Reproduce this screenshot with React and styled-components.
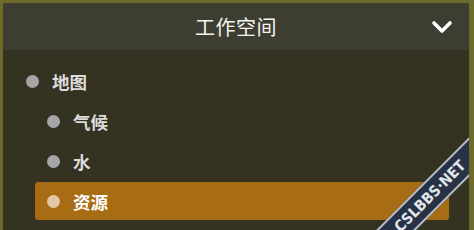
import React from "react";
import styled, { createGlobalStyle } from "styled-components";

const Global = createGlobalStyle`
  html, body { margin: 0; padding: 0; background: #343221; overflow: hidden; }
  body { font-family: "Noto Sans CJK SC", "Noto Sans", sans-serif; }
`;

const Frame = styled.div`
  box-sizing: border-box;
  width: 474px;
  height: 230px;
  overflow: hidden;
  background: #6d6a2c;
  padding: 3px 5px 0 3px;
`;

const Panel = styled.div`
  position: relative;
  overflow: hidden;
  height: 100%;
  background: #343221;
  display: flex;
  flex-direction: column;
`;

const Header = styled.div`
  height: 47px;
  flex: none;
  background: #3d3d32;
  display: flex;
  align-items: center;
  justify-content: center;
  position: relative;
`;

const Title = styled.div`
  color: #f4f4f0;
  font-size: 20px;
  font-weight: 400;
  letter-spacing: 0.5px;
  line-height: 1;
`;

const Toggle = styled.button`
  position: absolute;
  right: 16px;
  top: 50%;
  transform: translateY(-50%);
  background: none;
  border: none;
  padding: 0;
  display: flex;
`;

const List = styled.ul`
  list-style: none;
  margin: 0;
  padding: 12px 20px 0 11px;
  display: flex;
  flex-direction: column;
  gap: 2px;
`;

const Row = styled.li`
  height: 38px;
  box-sizing: border-box;
  display: flex;
  align-items: center;
  gap: 13px;
  padding-left: 12px;
  margin-left: ${(p) => (p.$level ? 21 : 0)}px;
  border-radius: 3px;
  background: ${(p) => (p.$active ? "#a86c15" : "transparent")};
  color: ${(p) => (p.$active ? "#ffffff" : "#dcdcdc")};
  font-size: 17.5px;
  font-weight: 700;
`;

const Dot = styled.span`
  width: 13px;
  height: 13px;
  border-radius: 50%;
  flex: none;
  background: ${(p) => (p.$active ? "#e3c8a6" : "#a7a6a6")};
`;

const Band = styled.div`
  position: absolute;
  left: 277px;
  top: 179px;
  width: 300px;
  height: 28px;
  box-sizing: border-box;
  transform: rotate(-45deg);
  background: #273246;
  border-top: 2px solid #b8c0c8;
  border-bottom: 2px solid #b8c0c8;
  display: flex;
  align-items: center;
  justify-content: center;
  color: #e2e6ea;
  font-family: "DejaVu Sans Condensed", "DejaVu Sans", sans-serif;
  font-weight: 700;
  font-size: 15px;
  letter-spacing: 0px;
`;

const items = [
  { label: "地图", level: 0 },
  { label: "气候", level: 1 },
  { label: "水", level: 1 },
  { label: "资源", level: 1, active: true },
];

export default function App() {
  return (
    <>
      <Global />
      <Frame>
        <Panel>
          <Header>
            <Title>工作空间</Title>
            <Toggle aria-label="collapse">
              <svg width="22" height="14" viewBox="0 0 22 14">
                <path
                  d="M3 3 L11 11 L19 3"
                  fill="none"
                  stroke="#ffffff"
                  strokeWidth="3.6"
                  strokeLinecap="round"
                  strokeLinejoin="round"
                />
              </svg>
            </Toggle>
          </Header>
          <List>
            {items.map((it) => (
              <Row key={it.label} $level={it.level} $active={it.active}>
                <Dot $active={it.active} />
                <span>{it.label}</span>
              </Row>
            ))}
          </List>
          <Band>CSLBBS·NET</Band>
        </Panel>
      </Frame>
    </>
  );
}
